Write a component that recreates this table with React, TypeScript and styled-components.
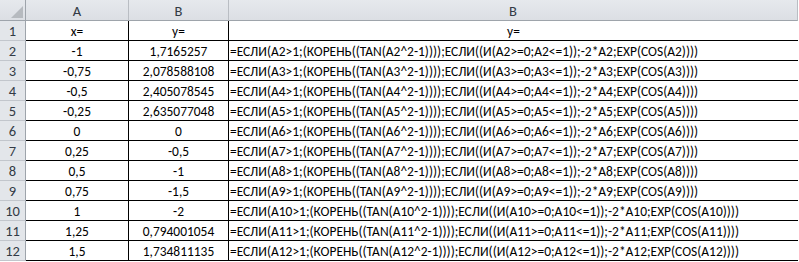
import React from "react";
import styled, { createGlobalStyle } from "styled-components";

const GlobalStyle = createGlobalStyle`
  body {
    margin: 0;
    background: #ffffff;
  }
`;

const Sheet = styled.div`
  display: grid;
  grid-template-columns: 26px 103px 100px 569px;
  grid-auto-rows: 20px;
  grid-template-rows: 21px;
  width: 799px;
  font-family: "Carlito", "Liberation Sans", Arial, sans-serif;
  font-size: 13.45px;
  color: #000;
`;

const HeaderCell = styled.div`
  display: flex;
  align-items: center;
  justify-content: center;
  background: linear-gradient(#e6e9ed, #dcdfe4);
  border-right: 1px solid #b9bdc3;
  border-bottom: 1px solid #9ea4ab;
  color: #333b45;
  font-size: 14.5px;
  padding-top: 1px;
  box-sizing: border-box;
`;

const RowHead = styled(HeaderCell)`
  border-bottom: 1px solid #c2c6cc;
  border-right: 1px solid #9ea4ab;
  background: #e3e6ea;
`;

const Corner = styled(HeaderCell)`
  position: relative;
  border-right: 1px solid #9ea4ab;
`;

const CornerMark = styled.svg`
  position: absolute;
  right: 2px;
  bottom: 2px;
`;

const Cell = styled.div<{ $align?: "center" | "left"; $last?: boolean }>`
  display: flex;
  align-items: center;
  justify-content: ${(p) => (p.$align === "left" ? "flex-start" : "center")};
  border-bottom: 1px solid #000;
  border-right: ${(p) => (p.$last ? "none" : "1px solid #000")};
  padding-left: ${(p) => (p.$align === "left" ? "1px" : "0")};
  white-space: nowrap;
  overflow: visible;
  box-sizing: border-box;
  padding-top: 2px;
`;

const rows: [string, string][] = [
  ["-1", "1,7165257"],
  ["-0,75", "2,078588108"],
  ["-0,5", "2,405078545"],
  ["-0,25", "2,635077048"],
  ["0", "0"],
  ["0,25", "-0,5"],
  ["0,5", "-1"],
  ["0,75", "-1,5"],
  ["1", "-2"],
  ["1,25", "0,794001054"],
  ["1,5", "1,734811135"],
];

const formula = (r: number) =>
  `=ЕСЛИ(A${r}>1;(КОРЕНЬ((TAN(A${r}^2-1))));ЕСЛИ((И(A${r}>=0;A${r}<=1));-2*A${r};EXP(COS(A${r}))))`;

const App = () => (
  <>
    <GlobalStyle />
    <Sheet>
      <Corner>
        <CornerMark width="12" height="12" viewBox="0 0 12 12">
          <polygon points="12,0 12,12 0,12" fill="#b6babf" />
        </CornerMark>
      </Corner>
      <HeaderCell>A</HeaderCell>
      <HeaderCell>B</HeaderCell>
      <HeaderCell>B</HeaderCell>

      <RowHead>1</RowHead>
      <Cell>x=</Cell>
      <Cell>y=</Cell>
      <Cell $last>y=</Cell>

      {rows.map(([x, y], i) => (
        <React.Fragment key={i}>
          <RowHead>{i + 2}</RowHead>
          <Cell>{x}</Cell>
          <Cell>{y}</Cell>
          <Cell $align="left" $last>
            {formula(i + 2)}
          </Cell>
        </React.Fragment>
      ))}
    </Sheet>
  </>
);

export default App;
